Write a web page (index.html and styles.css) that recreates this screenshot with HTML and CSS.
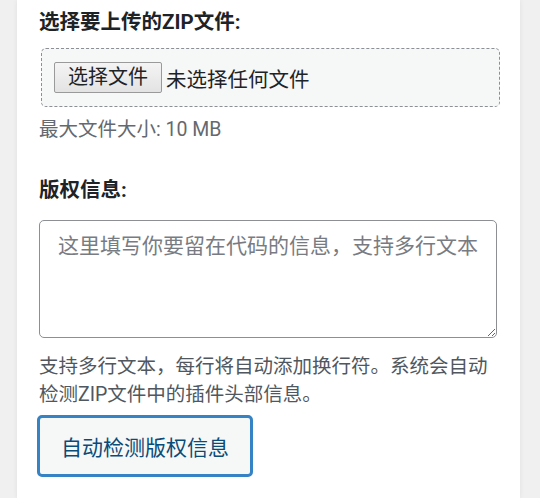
FILE: index.html
```html
<!DOCTYPE html>
<html lang="zh-CN">
<head>
<meta charset="utf-8">
<title>上传ZIP文件</title>
<link rel="stylesheet" href="styles.css">
</head>
<body>
<div class="card">
  <div class="field-label">选择要上传的ZIP文件:</div>
  <div class="drop-box">
    <span class="file-btn">选择文件</span>
    <span class="file-name">未选择任何文件</span>
  </div>
  <div class="hint">最大文件大小: 10 MB</div>

  <div class="field-label second">版权信息:</div>
  <textarea class="copyright" placeholder="这里填写你要留在代码的信息，支持多行文本"></textarea>
  <p class="desc">支持多行文本，每行将自动添加换行符。系统会自动检测ZIP文件中的插件头部信息。</p>
  <button class="detect-btn" type="button">自动检测版权信息</button>
</div>
</body>
</html>
```
FILE: styles.css
```css
* { box-sizing: border-box; }
html, body {
  margin: 0;
  padding: 0;
  background: #f0f0f1;
  font-family: Roboto, "Noto Sans CJK SC", sans-serif;
}
body { overflow: hidden; height: 498px; }

.card {
  margin-left: 17px;
  width: 503px;
  min-height: 498px;
  background: #ffffff;
  box-shadow: 0 0 5px rgba(0, 0, 0, 0.07);
  padding: 8px 22px 0 22px;
}

.field-label {
  font-size: 20.5px;
  font-weight: 700;
  line-height: 28px;
  color: #1d2327;
}
.field-label.second { margin-top: 34px; }

.drop-box {
  margin-top: 12px;
  margin-left: 2px;
  width: 459px;
  height: 59px;
  border: 1px dashed #8c8f94;
  border-radius: 5px;
  background: #f6f7f7;
  padding: 0 12px;
  display: flex;
  align-items: center;
}

.file-btn {
  display: inline-block;
  height: 31px;
  line-height: 29px;
  padding: 0 13px;
  font-size: 20px;
  color: #1d2327;
  border: 1px solid #9a9a9a;
  border-radius: 2px;
  background: linear-gradient(#f4f4f4, #e3e3e3);
}
.file-name {
  margin-left: 4px;
  font-size: 20.5px;
  color: #1d2327;
}

.hint {
  margin-top: 11px;
  font-size: 19.5px;
  line-height: 24px;
  height: 24px;
  color: #646970;
}

.copyright {
  display: block;
  margin-top: 16px;
  width: 458px;
  height: 118px;
  border: 1px solid #8c8f94;
  border-radius: 5px;
  padding: 11px 10px 10px 18px;
  font-family: Roboto, "Noto Sans CJK SC", sans-serif;
  font-size: 21px;
  line-height: 29px;
  color: #2c3338;
  background: #ffffff;
  resize: vertical;
  outline: none;
}
.copyright::placeholder { color: #787c82; }

.desc {
  margin: 15px 0 0 0;
  font-size: 19.5px;
  line-height: 28px;
  color: #50575e;
}

.detect-btn {
  display: block;
  margin: 6px 0 0 -2px;
  width: 216px;
  height: 62px;
  padding: 0;
  border: 3px solid #3582c4;
  border-radius: 5px;
  background: #f6f7f7;
  color: #0a4b78;
  font-family: Roboto, "Noto Sans CJK SC", sans-serif;
  font-size: 21px;
  text-align: center;
}
```
